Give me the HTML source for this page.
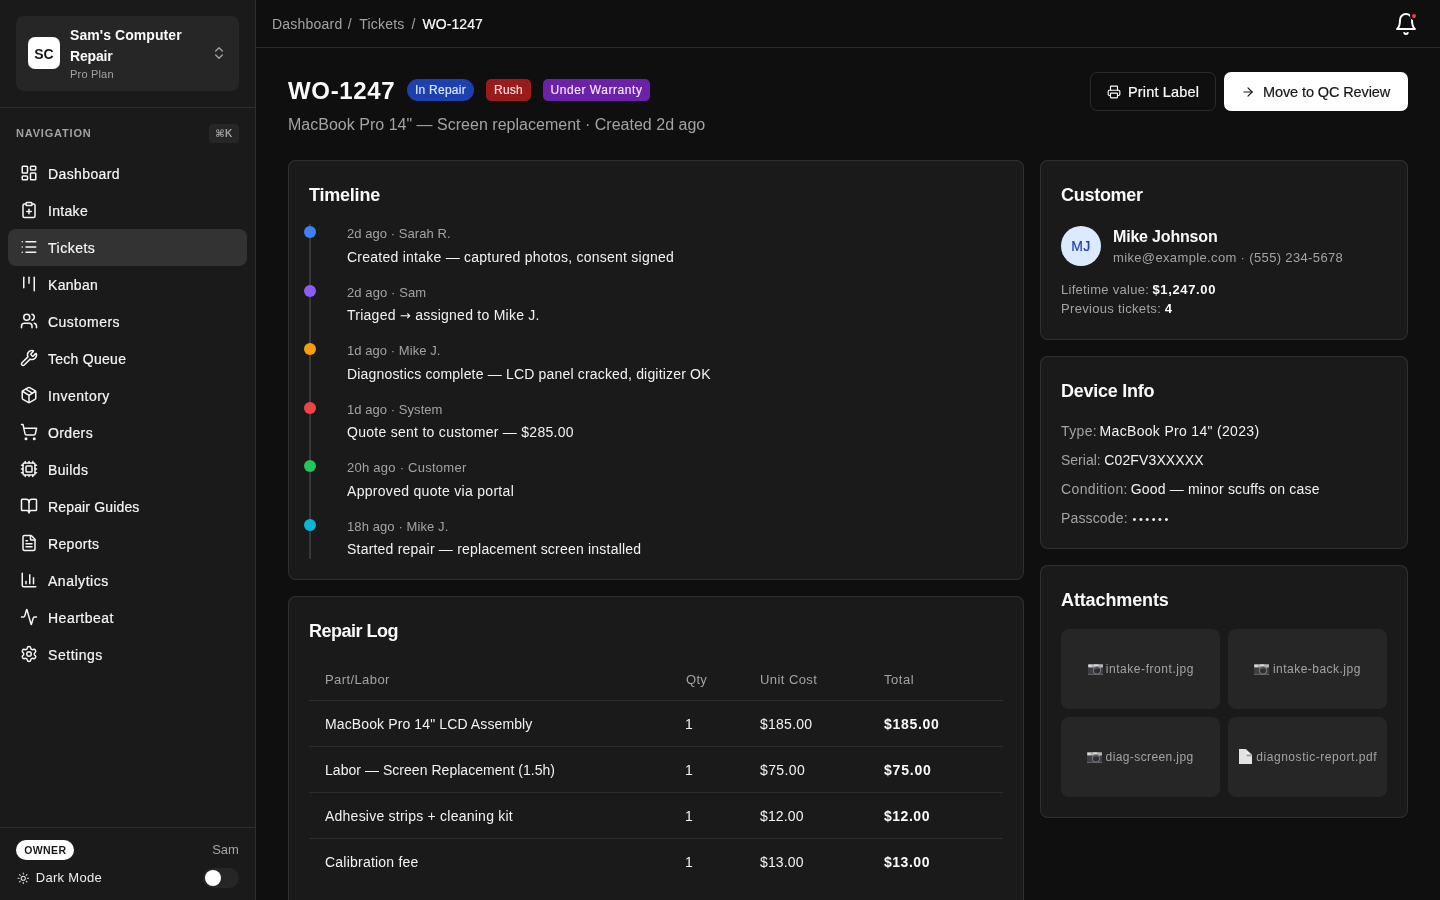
<!DOCTYPE html>
<html lang="en">
<head>
<meta charset="utf-8">
<title>WO-1247 — Sam's Computer Repair</title>
<style>
*{box-sizing:border-box;margin:0;padding:0}
html,body{width:1440px;height:900px;overflow:hidden;background:#0f0f0f;color:#fafafa;
  font-family:"Liberation Sans","DejaVu Sans",sans-serif;filter:opacity(1)}
svg{display:block}
.ico{fill:none;stroke:currentColor;stroke-width:2;stroke-linecap:round;stroke-linejoin:round}
.t{position:absolute;white-space:nowrap;line-height:1}
.ar{font-family:"DejaVu Sans",sans-serif;font-size:13px;line-height:1}
/* ---------- sidebar ---------- */
#sidebar{position:absolute;left:0;top:0;width:256px;height:900px;background:#1a1a1a;border-right:1px solid #2e2e2e}
#org{position:absolute;left:16px;top:16px;width:223px;height:75px;background:#262626;border-radius:8px}
#org .logo{position:absolute;left:12px;top:21px;width:32px;height:32px;border-radius:7px;background:#fff;color:#171717;
  font-weight:700;font-size:14px;line-height:34px;text-align:center}
#org .chev{position:absolute;left:195px;top:29px;width:16px;height:16px;color:#a3a3a3}
#sidebar .hr1{position:absolute;left:0;top:107px;width:255px;height:1px;background:#2e2e2e}
#kbd{position:absolute;left:209px;top:124px;width:30px;height:19px;border-radius:4px;background:#262626;color:#a3a3a3;
  font:700 10px/19px "Liberation Sans","DejaVu Sans",sans-serif;text-align:center;letter-spacing:.6px}
#nav{position:absolute;left:8px;top:155px;width:239px}
#nav .it{position:absolute;left:0;width:239px;height:37px;border-radius:8px;display:block}
#nav .it.on{background:#333}
#nav .it svg{position:absolute;left:12px;top:9px;width:18px;height:18px;color:#f5f5f5}
#sidebar .hr2{position:absolute;left:0;top:827px;width:255px;height:1px;background:#2e2e2e}
#owner{position:absolute;left:16px;top:840px;width:58px;height:20px;border-radius:10px;background:#fff;color:#171717;
  }
#sidebar .sun{position:absolute;left:16.5px;top:871.7px;width:12.5px;height:12.5px;color:#e5e5e5}
#tog{position:absolute;left:203px;top:868px;width:36px;height:20px;border-radius:10px;background:#262626}
#tog i{position:absolute;left:2px;top:2px;width:16px;height:16px;border-radius:50%;background:#fff}
/* ---------- top bar ---------- */
#top{position:absolute;left:256px;top:0;width:1184px;height:48px;border-bottom:1px solid #2a2a2a}
#top .bell{position:absolute;left:1138px;top:12px;width:24px;height:24px;color:#fafafa}
#belldot{position:absolute;left:1153.8px;top:11.8px;width:8.4px;height:8.4px;border-radius:50%;background:#ef4444;border:2px solid #0f0f0f}
/* ---------- page head ---------- */
#main{position:absolute;left:256px;top:48px;width:1184px;height:112px}
.bdg{position:absolute;top:31px;height:22px;font-size:12px;line-height:22px;text-align:center;white-space:nowrap;-webkit-text-stroke:.15px}
#bg1{left:151px;width:67px;border-radius:11px;background:#1e40af;color:#dbeafe;letter-spacing:.25px}
#bg2{left:230px;width:45px;border-radius:5px;background:#991b1b;color:#fee2e2;letter-spacing:.25px}
#bg3{left:287px;width:107px;border-radius:5px;background:#6b21a8;color:#f3e8ff;letter-spacing:.55px}
.btn{position:absolute;top:72px;height:39px;border-radius:7px}
.btn svg{position:absolute;top:12.5px;width:14px;height:14px}
#btn1{left:1090px;width:126px;border:1px solid #2a2a2a;color:#fafafa}
#btn1 svg{left:16px;top:12px}
#btn2{left:1224px;width:184px;background:#fff;color:#171717}
#btn2 svg{left:17px;top:13px}
/* ---------- cards ---------- */
.card{position:absolute;background:#1a1a1a;box-shadow:inset 0 0 0 1px #303030;border-radius:8px;overflow:hidden}
#tl{left:288px;top:160px;width:736px;height:420px}
#rl{left:288px;top:596px;width:736px;height:330px}
#cu{left:1040px;top:160px;width:368px;height:180px}
#dv{left:1040px;top:356px;width:368px;height:193px}
#at{left:1040px;top:565px;width:368px;height:253px}
#tl .ln{position:absolute;left:21px;top:64px;width:2px;height:335px;background:#383838}
#tl .dot{position:absolute;left:16px;width:12px;height:12px;border-radius:50%}
#rl .rw{position:absolute;left:21px;width:694px;height:1px;background:#2c2c2c}
#cu .av{position:absolute;left:21px;top:66px;width:40px;height:40px;border-radius:50%;background:#dbeafe;color:#1e40af;
  font-size:14px;line-height:40px;text-align:center;letter-spacing:.3px;-webkit-text-stroke:.2px}
#at .tile{position:absolute;width:159px;height:80px;border-radius:8px;background:#262626}
#at .em{position:absolute}
</style>
</head>
<body>
<aside id="sidebar">
  <div id="org">
    <div class="logo">SC</div>
    <span class="t" id="o1" style="left:54.00px;top:12.00px;font-size:14px;color:#fafafa;font-weight:700;letter-spacing:0.070px;">Sam's Computer</span>
    <span class="t" id="o2" style="left:54.00px;top:33.00px;font-size:14px;color:#fafafa;font-weight:700;letter-spacing:-0.185px;">Repair</span>
    <span class="t" id="o3" style="left:54.00px;top:53.00px;font-size:11px;color:#a3a3a3;letter-spacing:0.190px;">Pro Plan</span>
    <svg class="ico chev" viewBox="0 0 24 24"><path d="m7 15 5 5 5-5"/><path d="m7 9 5-5 5 5"/></svg>
  </div>
  <div class="hr1"></div>
  <span class="t" id="nl" style="left:16.00px;top:128.00px;font-size:11px;color:#a3a3a3;font-weight:700;letter-spacing:0.815px;">NAVIGATION</span>
  <kbd id="kbd">⌘K</kbd>
  <nav id="nav">
    <a class="it" style="top:0px"><svg class="ico" viewBox="0 0 24 24"><rect width="7" height="9" x="3" y="3" rx="1"/><rect width="7" height="5" x="14" y="3" rx="1"/><rect width="7" height="9" x="14" y="12" rx="1"/><rect width="7" height="5" x="3" y="16" rx="1"/></svg><span class="t" id="n0" style="left:40.00px;top:12.00px;font-size:14px;color:#f5f5f5;letter-spacing:0.386px;-webkit-text-stroke:.2px;">Dashboard</span></a>
    <a class="it" style="top:37px"><svg class="ico" viewBox="0 0 24 24"><rect width="8" height="4" x="8" y="2" rx="1" ry="1"/><path d="M16 4h2a2 2 0 0 1 2 2v14a2 2 0 0 1-2 2H6a2 2 0 0 1-2-2V6a2 2 0 0 1 2-2h2"/><path d="M9 14h6"/><path d="M12 17v-6"/></svg><span class="t" id="n1" style="left:40.00px;top:12.00px;font-size:14px;color:#f5f5f5;letter-spacing:0.316px;-webkit-text-stroke:.2px;">Intake</span></a>
    <a class="it on" style="top:74px"><svg class="ico" viewBox="0 0 24 24"><path d="M3 5h.01"/><path d="M3 12h.01"/><path d="M3 19h.01"/><path d="M8 5h13"/><path d="M8 12h13"/><path d="M8 19h13"/></svg><span class="t" id="n2" style="left:40.00px;top:12.00px;font-size:14px;color:#f5f5f5;letter-spacing:0.506px;-webkit-text-stroke:.2px;">Tickets</span></a>
    <a class="it" style="top:111px"><svg class="ico" viewBox="0 0 24 24"><path d="M5 3v14"/><path d="M12 3v8"/><path d="M19 3v18"/></svg><span class="t" id="n3" style="left:40.00px;top:12.00px;font-size:14px;color:#f5f5f5;letter-spacing:0.297px;-webkit-text-stroke:.2px;">Kanban</span></a>
    <a class="it" style="top:148px"><svg class="ico" viewBox="0 0 24 24"><path d="M16 21v-2a4 4 0 0 0-4-4H6a4 4 0 0 0-4 4v2"/><circle cx="9" cy="7" r="4"/><path d="M22 21v-2a4 4 0 0 0-3-3.87"/><path d="M16 3.13a4 4 0 0 1 0 7.75"/></svg><span class="t" id="n4" style="left:40.00px;top:12.00px;font-size:14px;color:#f5f5f5;letter-spacing:0.486px;-webkit-text-stroke:.2px;">Customers</span></a>
    <a class="it" style="top:185px"><svg class="ico" viewBox="0 0 24 24"><path d="M14.7 6.3a1 1 0 0 0 0 1.4l1.6 1.6a1 1 0 0 0 1.4 0l3.106-3.105c.32-.322.863-.22.983.218a6 6 0 0 1-8.259 7.057l-7.91 7.91a1 1 0 0 1-2.999-3l7.91-7.91a6 6 0 0 1 7.057-8.259c.438.12.54.662.219.984z"/></svg><span class="t" id="n5" style="left:40.00px;top:12.00px;font-size:14px;color:#f5f5f5;letter-spacing:0.269px;-webkit-text-stroke:.2px;">Tech Queue</span></a>
    <a class="it" style="top:222px"><svg class="ico" viewBox="0 0 24 24"><path d="M11 21.73a2 2 0 0 0 2 0l7-4A2 2 0 0 0 21 16V8a2 2 0 0 0-1-1.73l-7-4a2 2 0 0 0-2 0l-7 4A2 2 0 0 0 3 8v8a2 2 0 0 0 1 1.73z"/><path d="M12 22V12"/><path d="m3.3 7 7.703 4.734a2 2 0 0 0 1.994 0L20.7 7"/><path d="m7.5 4.27 9 5.15"/></svg><span class="t" id="n6" style="left:40.00px;top:12.00px;font-size:14px;color:#f5f5f5;letter-spacing:0.463px;-webkit-text-stroke:.2px;">Inventory</span></a>
    <a class="it" style="top:259px"><svg class="ico" viewBox="0 0 24 24"><circle cx="8" cy="21" r="1"/><circle cx="19" cy="21" r="1"/><path d="M2.05 2.05h2l2.66 12.42a2 2 0 0 0 2 1.58h9.78a2 2 0 0 0 1.95-1.57l1.65-7.43H5.12"/></svg><span class="t" id="n7" style="left:40.00px;top:12.00px;font-size:14px;color:#f5f5f5;letter-spacing:0.373px;-webkit-text-stroke:.2px;">Orders</span></a>
    <a class="it" style="top:296px"><svg class="ico" viewBox="0 0 24 24"><path d="M12 20v2"/><path d="M12 2v2"/><path d="M17 20v2"/><path d="M17 2v2"/><path d="M2 12h2"/><path d="M2 17h2"/><path d="M2 7h2"/><path d="M20 12h2"/><path d="M20 17h2"/><path d="M20 7h2"/><path d="M7 20v2"/><path d="M7 2v2"/><rect x="4" y="4" width="16" height="16" rx="2"/><rect x="8" y="8" width="8" height="8" rx="1"/></svg><span class="t" id="n8" style="left:40.00px;top:12.00px;font-size:14px;color:#f5f5f5;letter-spacing:0.361px;-webkit-text-stroke:.2px;">Builds</span></a>
    <a class="it" style="top:333px"><svg class="ico" viewBox="0 0 24 24"><path d="M12 7v14"/><path d="M3 18a1 1 0 0 1-1-1V4a1 1 0 0 1 1-1h5a4 4 0 0 1 4 4 4 4 0 0 1 4-4h5a1 1 0 0 1 1 1v13a1 1 0 0 1-1 1h-6a3 3 0 0 0-3 3 3 3 0 0 0-3-3z"/></svg><span class="t" id="n9" style="left:40.00px;top:12.00px;font-size:14px;color:#f5f5f5;letter-spacing:0.157px;-webkit-text-stroke:.2px;">Repair Guides</span></a>
    <a class="it" style="top:370px"><svg class="ico" viewBox="0 0 24 24"><path d="M6 22a2 2 0 0 1-2-2V4a2 2 0 0 1 2-2h8a2.4 2.4 0 0 1 1.704.706l3.588 3.588A2.4 2.4 0 0 1 20 8v12a2 2 0 0 1-2 2z"/><path d="M14 2v5a1 1 0 0 0 1 1h5"/><path d="M10 9H8"/><path d="M16 13H8"/><path d="M16 17H8"/></svg><span class="t" id="n10" style="left:40.00px;top:12.00px;font-size:14px;color:#f5f5f5;letter-spacing:0.325px;-webkit-text-stroke:.2px;">Reports</span></a>
    <a class="it" style="top:407px"><svg class="ico" viewBox="0 0 24 24"><path d="M3 3v16a2 2 0 0 0 2 2h16"/><path d="M18 17V9"/><path d="M13 17V5"/><path d="M8 17v-3"/></svg><span class="t" id="n11" style="left:40.00px;top:12.00px;font-size:14px;color:#f5f5f5;letter-spacing:0.524px;-webkit-text-stroke:.2px;">Analytics</span></a>
    <a class="it" style="top:444px"><svg class="ico" viewBox="0 0 24 24"><path d="M22 12h-2.48a2 2 0 0 0-1.93 1.46l-2.35 8.36a.25.25 0 0 1-.48 0L9.24 2.18a.25.25 0 0 0-.48 0l-2.35 8.36A2 2 0 0 1 4.49 12H2"/></svg><span class="t" id="n12" style="left:40.00px;top:12.00px;font-size:14px;color:#f5f5f5;letter-spacing:0.504px;-webkit-text-stroke:.2px;">Heartbeat</span></a>
    <a class="it" style="top:481px"><svg class="ico" viewBox="0 0 24 24"><path d="M9.671 4.136a2.34 2.34 0 0 1 4.659 0 2.34 2.34 0 0 0 3.319 1.915 2.34 2.34 0 0 1 2.33 4.033 2.34 2.34 0 0 0 0 3.831 2.34 2.34 0 0 1-2.33 4.033 2.34 2.34 0 0 0-3.319 1.915 2.34 2.34 0 0 1-4.659 0 2.34 2.34 0 0 0-3.32-1.915 2.34 2.34 0 0 1-2.33-4.033 2.34 2.34 0 0 0 0-3.831A2.34 2.34 0 0 1 6.35 6.051a2.34 2.34 0 0 0 3.319-1.915"/><circle cx="12" cy="12" r="3"/></svg><span class="t" id="n13" style="left:40.00px;top:12.00px;font-size:14px;color:#f5f5f5;letter-spacing:0.538px;-webkit-text-stroke:.2px;">Settings</span></a>
  </nav>
  <div class="hr2"></div>
  <div id="owner"><span class="t" id="ow" style="left:8.22px;top:5.00px;font-size:10.5px;color:#171717;font-weight:700;letter-spacing:0.384px;">OWNER</span></div>
  <span class="t" id="un" style="left:212.15px;top:843.00px;font-size:13px;color:#a3a3a3;letter-spacing:0.030px;">Sam</span>
  <svg class="ico sun" viewBox="0 0 24 24"><circle cx="12" cy="12" r="4"/><path d="M12 2v2"/><path d="M12 20v2"/><path d="m4.93 4.93 1.41 1.41"/><path d="m17.66 17.66 1.41 1.41"/><path d="M2 12h2"/><path d="M20 12h2"/><path d="m6.34 17.66-1.41 1.41"/><path d="m19.07 4.93-1.41 1.41"/></svg>
  <span class="t" id="dm" style="left:35.72px;top:871.00px;font-size:13px;color:#ededed;letter-spacing:0.308px;">Dark Mode</span>
  <div id="tog"><i></i></div>
</aside>
<header id="top">
  <span class="t" id="c1" style="left:16.00px;top:17.00px;font-size:14px;color:#a3a3a3;letter-spacing:0.217px;">Dashboard</span><span class="t" id="c2" style="left:91.83px;top:17.00px;font-size:14px;color:#a3a3a3;">/</span><span class="t" id="c3" style="left:103.36px;top:17.00px;font-size:14px;color:#a3a3a3;letter-spacing:0.175px;">Tickets</span><span class="t" id="c4" style="left:155.41px;top:17.00px;font-size:14px;color:#a3a3a3;">/</span><span class="t" id="c5" style="left:166.47px;top:17.00px;font-size:14px;color:#fafafa;letter-spacing:0.080px;-webkit-text-stroke:.2px;">WO-1247</span>
  <svg class="ico bell" viewBox="0 0 24 24"><path d="M6 8a6 6 0 0 1 12 0c0 7 3 9 3 9H3s3-2 3-9"/><path d="M10.3 21a1.94 1.94 0 0 0 3.4 0"/></svg>
  <div id="belldot"></div>
</header>
<main id="main">
  <span class="t" id="h1" style="left:32.00px;top:31.00px;font-size:24px;color:#fafafa;font-weight:700;letter-spacing:0.656px;">WO-1247</span>
  <div class="bdg" id="bg1">In Repair</div>
  <div class="bdg" id="bg2">Rush</div>
  <div class="bdg" id="bg3">Under Warranty</div>
  <span class="t" id="sub" style="left:32.00px;top:69.00px;font-size:16px;color:#a3a3a3;letter-spacing:0.013px;">MacBook Pro 14" — Screen replacement · Created 2d ago</span>
</main>
<div class="btn" id="btn1"><svg class="ico" viewBox="0 0 24 24"><path d="M6 18H4a2 2 0 0 1-2-2v-5a2 2 0 0 1 2-2h16a2 2 0 0 1 2 2v5a2 2 0 0 1-2 2h-2"/><path d="M6 9V3a1 1 0 0 1 1-1h10a1 1 0 0 1 1 1v6"/><rect x="6" y="14" width="12" height="8" rx="1"/></svg><span class="t" id="b1" style="left:37.01px;top:12.00px;font-size:14.5px;color:#fafafa;letter-spacing:0.168px;-webkit-text-stroke:.2px;">Print Label</span></div>
<div class="btn" id="btn2"><svg class="ico" viewBox="0 0 24 24"><path d="M5 12h14"/><path d="m12 5 7 7-7 7"/></svg><span class="t" id="b2" style="left:39.05px;top:13.00px;font-size:14.5px;color:#171717;letter-spacing:-0.109px;-webkit-text-stroke:.2px;">Move to QC Review</span></div>
<section class="card" id="tl">
  <span class="t" id="tlh" style="left:21.00px;top:26.00px;font-size:18px;color:#fafafa;font-weight:700;letter-spacing:-0.218px;">Timeline</span>
  <div class="ln"></div>
  <div class="dot" style="top:66px;background:#3b82f6"></div><span class="t" id="em0" style="left:59.00px;top:67.00px;font-size:13px;color:#a3a3a3;letter-spacing:0.058px;">2d ago · Sarah R.</span><span class="t" id="eb0" style="left:59.00px;top:90.00px;font-size:14px;color:#f2f2f2;letter-spacing:0.248px;">Created intake — captured photos, consent signed</span>
  <div class="dot" style="top:125px;background:#8b5cf6"></div><span class="t" id="em1" style="left:59.00px;top:126.00px;font-size:13px;color:#a3a3a3;letter-spacing:0.097px;">2d ago · Sam</span><span class="t" id="eb1" style="left:59.00px;top:148.00px;font-size:14px;color:#f2f2f2;letter-spacing:0.250px;">Triaged <span class="ar">→</span> assigned to Mike J.</span>
  <div class="dot" style="top:183px;background:#f59e0b"></div><span class="t" id="em2" style="left:59.00px;top:184.00px;font-size:13px;color:#a3a3a3;letter-spacing:0.056px;">1d ago · Mike J.</span><span class="t" id="eb2" style="left:59.00px;top:207.00px;font-size:14px;color:#f2f2f2;letter-spacing:0.178px;">Diagnostics complete — LCD panel cracked, digitizer OK</span>
  <div class="dot" style="top:242px;background:#ef4444"></div><span class="t" id="em3" style="left:59.00px;top:243.00px;font-size:13px;color:#a3a3a3;letter-spacing:0.055px;">1d ago · System</span><span class="t" id="eb3" style="left:59.00px;top:265.00px;font-size:14px;color:#f2f2f2;letter-spacing:0.279px;">Quote sent to customer — $285.00</span>
  <div class="dot" style="top:300px;background:#22c55e"></div><span class="t" id="em4" style="left:59.00px;top:301.00px;font-size:13px;color:#a3a3a3;letter-spacing:0.255px;">20h ago · Customer</span><span class="t" id="eb4" style="left:59.00px;top:324.00px;font-size:14px;color:#f2f2f2;letter-spacing:0.300px;">Approved quote via portal</span>
  <div class="dot" style="top:359px;background:#06b6d4"></div><span class="t" id="em5" style="left:59.00px;top:360.00px;font-size:13px;color:#a3a3a3;letter-spacing:0.098px;">18h ago · Mike J.</span><span class="t" id="eb5" style="left:59.00px;top:382.00px;font-size:14px;color:#f2f2f2;letter-spacing:0.211px;">Started repair — replacement screen installed</span>
</section>
<section class="card" id="rl">
  <span class="t" id="rlh" style="left:21.00px;top:26.00px;font-size:18px;color:#fafafa;font-weight:700;letter-spacing:-0.507px;">Repair Log</span>
  <span class="t" id="th0" style="left:37.00px;top:77.00px;font-size:13px;color:#a3a3a3;letter-spacing:0.405px;">Part/Labor</span><span class="t" id="th1" style="left:398.00px;top:77.00px;font-size:13px;color:#a3a3a3;letter-spacing:0.308px;">Qty</span><span class="t" id="th2" style="left:472.00px;top:77.00px;font-size:13px;color:#a3a3a3;letter-spacing:0.431px;">Unit Cost</span><span class="t" id="th3" style="left:596.00px;top:77.00px;font-size:13px;color:#a3a3a3;letter-spacing:0.567px;">Total</span>
  <div class="rw" style="top:104px"></div>
  <span class="t" id="r0a" style="left:37.00px;top:121.00px;font-size:14px;color:#f2f2f2;letter-spacing:0.118px;">MacBook Pro 14" LCD Assembly</span><span class="t" id="r0b" style="left:397.00px;top:121.00px;font-size:14px;color:#f2f2f2;">1</span><span class="t" id="r0c" style="left:472.00px;top:121.00px;font-size:14px;color:#f2f2f2;letter-spacing:0.247px;">$185.00</span><span class="t" id="r0d" style="left:596.00px;top:121.00px;font-size:14px;color:#fafafa;font-weight:700;letter-spacing:0.703px;">$185.00</span>
  <div class="rw" style="top:150px"></div>
  <span class="t" id="r1a" style="left:37.00px;top:167.00px;font-size:14px;color:#f2f2f2;letter-spacing:0.039px;">Labor — Screen Replacement (1.5h)</span><span class="t" id="r1b" style="left:397.00px;top:167.00px;font-size:14px;color:#f2f2f2;">1</span><span class="t" id="r1c" style="left:472.00px;top:167.00px;font-size:14px;color:#f2f2f2;letter-spacing:0.371px;">$75.00</span><span class="t" id="r1d" style="left:596.00px;top:167.00px;font-size:14px;color:#fafafa;font-weight:700;letter-spacing:0.790px;">$75.00</span>
  <div class="rw" style="top:196px"></div>
  <span class="t" id="r2a" style="left:37.00px;top:213.00px;font-size:14px;color:#f2f2f2;letter-spacing:0.235px;">Adhesive strips + cleaning kit</span><span class="t" id="r2b" style="left:397.00px;top:213.00px;font-size:14px;color:#f2f2f2;">1</span><span class="t" id="r2c" style="left:472.00px;top:213.00px;font-size:14px;color:#f2f2f2;letter-spacing:0.139px;">$12.00</span><span class="t" id="r2d" style="left:596.00px;top:213.00px;font-size:14px;color:#fafafa;font-weight:700;letter-spacing:0.525px;">$12.00</span>
  <div class="rw" style="top:242px"></div>
  <span class="t" id="r3a" style="left:37.00px;top:259.00px;font-size:14px;color:#f2f2f2;letter-spacing:0.219px;">Calibration fee</span><span class="t" id="r3b" style="left:397.00px;top:259.00px;font-size:14px;color:#f2f2f2;">1</span><span class="t" id="r3c" style="left:472.00px;top:259.00px;font-size:14px;color:#f2f2f2;letter-spacing:0.139px;">$13.00</span><span class="t" id="r3d" style="left:596.00px;top:259.00px;font-size:14px;color:#fafafa;font-weight:700;letter-spacing:0.525px;">$13.00</span>
</section>
<section class="card" id="cu">
  <span class="t" id="cuh" style="left:21.00px;top:26.00px;font-size:18px;color:#fafafa;font-weight:700;letter-spacing:-0.274px;">Customer</span>
  <div class="av">MJ</div>
  <span class="t" id="cn" style="left:73.00px;top:69.00px;font-size:16px;color:#fafafa;font-weight:700;letter-spacing:-0.184px;">Mike Johnson</span>
  <span class="t" id="ce" style="left:73.00px;top:91.00px;font-size:13px;color:#a3a3a3;letter-spacing:0.356px;">mike@example.com · (555) 234-5678</span>
  <span class="t" id="cl1" style="left:21.00px;top:123.00px;font-size:13px;color:#a3a3a3;letter-spacing:0.287px;">Lifetime value:</span>
  <span class="t" id="cv1" style="left:112.42px;top:123.00px;font-size:13px;color:#fafafa;font-weight:700;letter-spacing:0.655px;">$1,247.00</span>
  <span class="t" id="cl2" style="left:21.00px;top:142.00px;font-size:13px;color:#a3a3a3;letter-spacing:0.321px;">Previous tickets:</span>
  <span class="t" id="cv2" style="left:124.86px;top:142.00px;font-size:13px;color:#fafafa;font-weight:700;letter-spacing:1.350px;">4</span>
</section>
<section class="card" id="dv">
  <span class="t" id="dvh" style="left:21.00px;top:26.00px;font-size:18px;color:#fafafa;font-weight:700;letter-spacing:-0.262px;">Device Info</span>
  <span class="t" id="dl1" style="left:21.00px;top:68.00px;font-size:14px;color:#a3a3a3;letter-spacing:0.377px;">Type:</span><span class="t" id="dv1" style="left:59.59px;top:68.00px;font-size:14px;color:#f2f2f2;letter-spacing:0.319px;">MacBook Pro 14" (2023)</span>
  <span class="t" id="dl2" style="left:21.00px;top:97.00px;font-size:14px;color:#a3a3a3;">Serial:</span><span class="t" id="dv2" style="left:64.37px;top:97.00px;font-size:14px;color:#f2f2f2;letter-spacing:0.110px;">C02FV3XXXXX</span>
  <span class="t" id="dl3" style="left:21.00px;top:126.00px;font-size:14px;color:#a3a3a3;letter-spacing:0.382px;">Condition:</span><span class="t" id="dv3" style="left:90.71px;top:126.00px;font-size:14px;color:#f2f2f2;letter-spacing:0.176px;">Good — minor scuffs on case</span>
  <span class="t" id="dl4" style="left:21.00px;top:155.00px;font-size:14px;color:#a3a3a3;letter-spacing:0.143px;">Passcode:</span><span class="t" id="dv4" style="left:92.47px;top:158.00px;font-size:11px;color:#f2f2f2;letter-spacing:2.561px;">••••••</span>
</section>
<section class="card" id="at">
  <span class="t" id="ath" style="left:21.00px;top:26.00px;font-size:18px;color:#fafafa;font-weight:700;letter-spacing:-0.123px;">Attachments</span>
  <div class="tile" style="left:21px;top:64px"></div>
  <svg class="em" style="left:48.0px;top:99.3px" width="15" height="11" viewBox="0 0 15 11"><rect x="0" y="0.2" width="15" height="10.6" rx=".6" fill="#3e3e40"/><rect x="0" y="0.3" width="15" height="3.1" rx=".6" fill="#b4b4b7"/><rect x="0" y="9.9" width="15" height=".9" fill="#6c6c6e"/><path d="M.8 2.4 1.6.6l.7 1.1.7-1.1.8 1.8z" fill="#f0f0f0"/><rect x="6.2" y=".5" width="4" height="1.4" fill="#e2e0d8"/><circle cx="9" cy="6.4" r="4.1" fill="#70757c"/><circle cx="9" cy="6.4" r="3" fill="#2c2e33"/><path d="M7 5.6a2.3 2.3 0 0 1 3.6-.9" stroke="#5d6670" stroke-width=".8" fill="none"/><rect x="12.2" y="2.7" width="1.1" height="1.1" fill="#d6b43c"/></svg><span class="t" id="a1" style="left:65.75px;top:98.00px;font-size:12px;color:#a3a3a3;letter-spacing:0.554px;">intake-front.jpg</span>
  <div class="tile" style="left:188px;top:64px"></div>
  <svg class="em" style="left:214.2px;top:99.3px" width="15" height="11" viewBox="0 0 15 11"><rect x="0" y="0.2" width="15" height="10.6" rx=".6" fill="#3e3e40"/><rect x="0" y="0.3" width="15" height="3.1" rx=".6" fill="#b4b4b7"/><rect x="0" y="9.9" width="15" height=".9" fill="#6c6c6e"/><path d="M.8 2.4 1.6.6l.7 1.1.7-1.1.8 1.8z" fill="#f0f0f0"/><rect x="6.2" y=".5" width="4" height="1.4" fill="#e2e0d8"/><circle cx="9" cy="6.4" r="4.1" fill="#70757c"/><circle cx="9" cy="6.4" r="3" fill="#2c2e33"/><path d="M7 5.6a2.3 2.3 0 0 1 3.6-.9" stroke="#5d6670" stroke-width=".8" fill="none"/><rect x="12.2" y="2.7" width="1.1" height="1.1" fill="#d6b43c"/></svg><span class="t" id="a2" style="left:232.95px;top:98.00px;font-size:12px;color:#a3a3a3;letter-spacing:0.478px;">intake-back.jpg</span>
  <div class="tile" style="left:21px;top:152px"></div>
  <svg class="em" style="left:47.2px;top:187.3px" width="15" height="11" viewBox="0 0 15 11"><rect x="0" y="0.2" width="15" height="10.6" rx=".6" fill="#3e3e40"/><rect x="0" y="0.3" width="15" height="3.1" rx=".6" fill="#b4b4b7"/><rect x="0" y="9.9" width="15" height=".9" fill="#6c6c6e"/><path d="M.8 2.4 1.6.6l.7 1.1.7-1.1.8 1.8z" fill="#f0f0f0"/><rect x="6.2" y=".5" width="4" height="1.4" fill="#e2e0d8"/><circle cx="9" cy="6.4" r="4.1" fill="#70757c"/><circle cx="9" cy="6.4" r="3" fill="#2c2e33"/><path d="M7 5.6a2.3 2.3 0 0 1 3.6-.9" stroke="#5d6670" stroke-width=".8" fill="none"/><rect x="12.2" y="2.7" width="1.1" height="1.1" fill="#d6b43c"/></svg><span class="t" id="a3" style="left:65.61px;top:186.00px;font-size:12px;color:#a3a3a3;letter-spacing:0.394px;">diag-screen.jpg</span>
  <div class="tile" style="left:188px;top:152px"></div>
  <svg class="em" style="left:199.0px;top:184.0px" width="13" height="15" viewBox="0 0 13 15"><path d="M0 0h6.8L13 5.8V15H0z" fill="#e3e3e3"/><path d="M7.6 2.2v3.6h3.9z" fill="#f6f6f6"/><path d="M7.6 5.6H13v1.6H7.6z" fill="#8a8a8a" opacity=".85"/><path d="M11.4 5.6 13 5.8v1.4h-1.6z" fill="#e3e3e3" opacity=".4"/></svg><span class="t" id="a4" style="left:216.27px;top:186.00px;font-size:12px;color:#a3a3a3;letter-spacing:0.548px;">diagnostic-report.pdf</span>
</section>
</body>
</html>
